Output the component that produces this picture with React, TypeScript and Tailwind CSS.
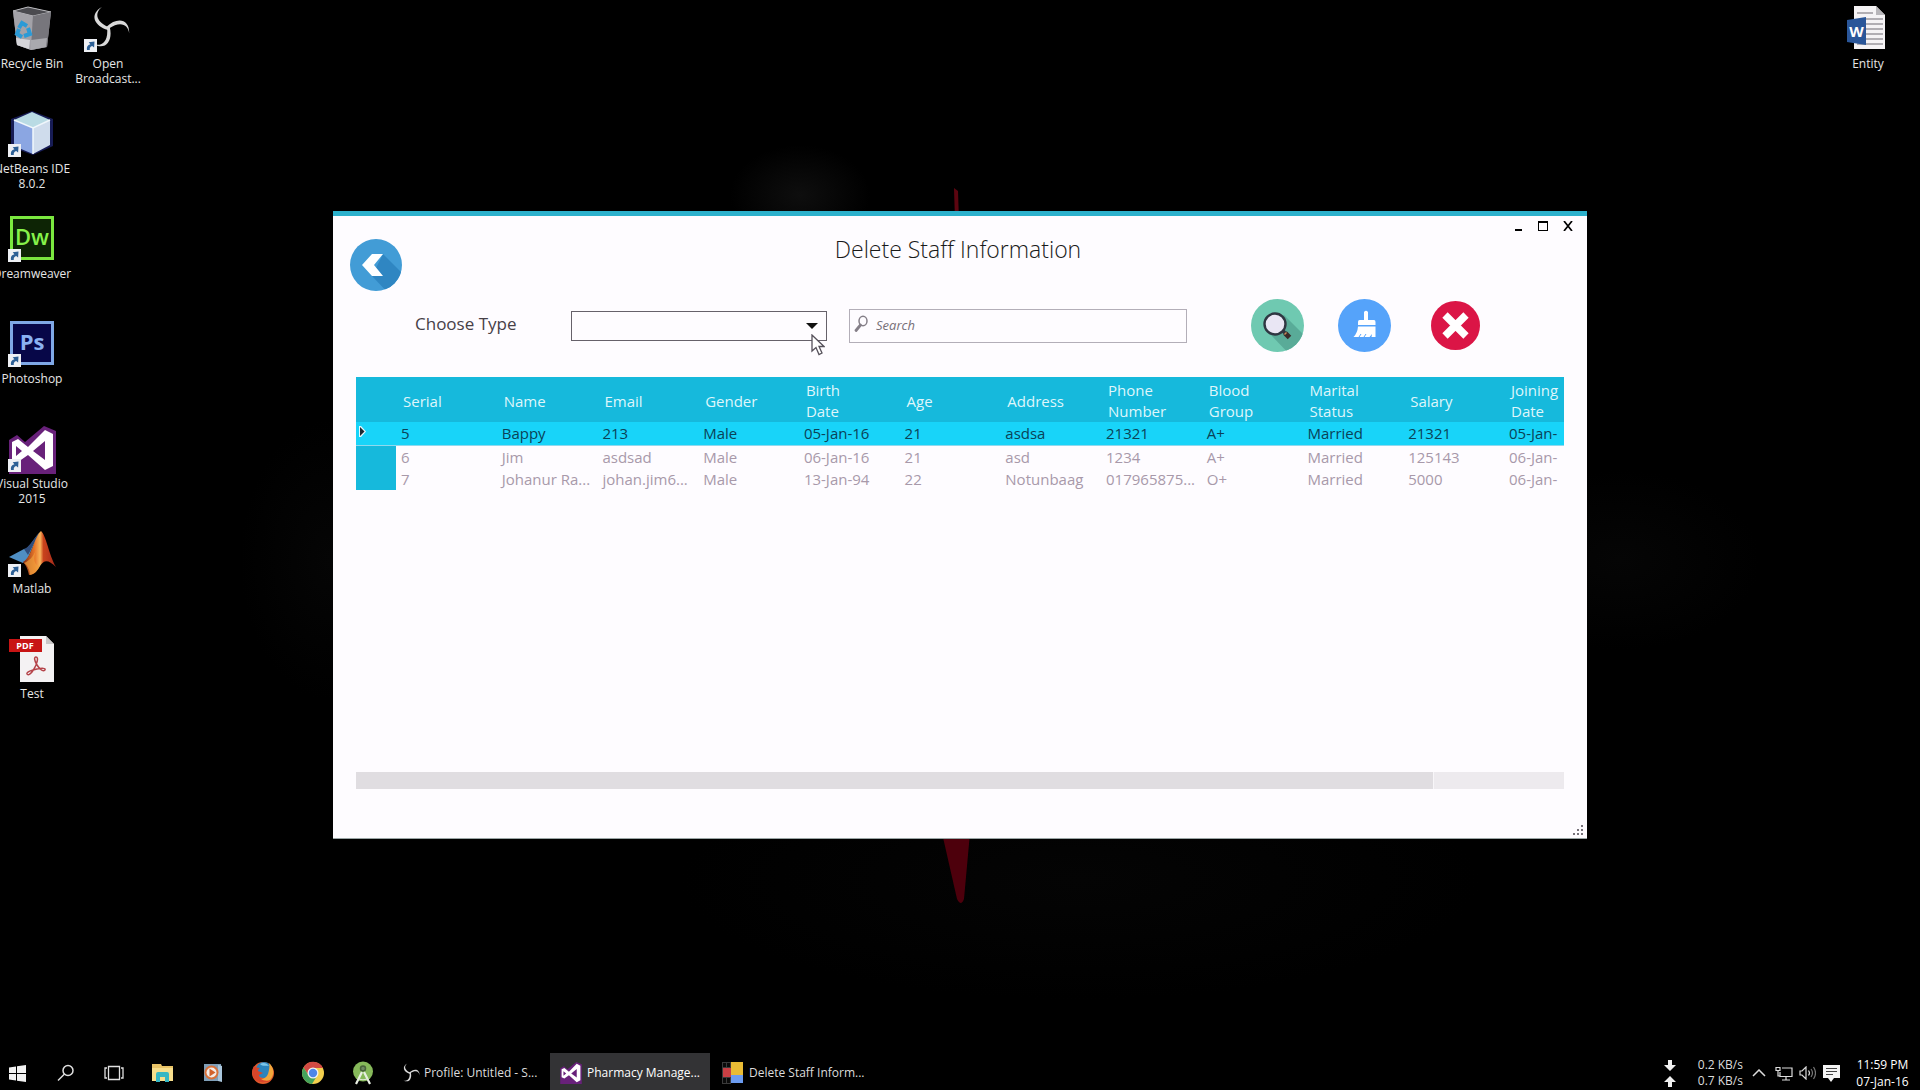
import React from "react";

function ShortcutArrow() {
  return (
    <svg viewBox="0 0 13 13" className="absolute bottom-0 left-0 size-[13px]" aria-hidden="true">
      <rect width="13" height="13" fill="#eef0f4" />
      <path d="M3 11c-.6-3 .6-5 3.400-5.700L4.700 3.300 10.500 2.500l-.4 5.900-1.900-1.500C6.300 7.500 5.500 8.800 5.800 11z" fill="#2c5f95" />
    </svg>
  );
}

function ObsMark({ className }: { className: string }) {
  return (
    <svg viewBox="0 0 44 44" className={className} aria-hidden="true">
      <g fill="#d9d9d9">
        <path d="M16 1C9 6 9 15 22 21 23 22 23 23 22 24 8 20 3 8 16 1z" />
        <path d="M16 1C9 6 9 15 22 21 23 22 23 23 22 24 8 20 3 8 16 1z" transform="rotate(120 22 22)" />
        <path d="M16 1C9 6 9 15 22 21 23 22 23 23 22 24 8 20 3 8 16 1z" transform="rotate(240 22 22)" />
      </g>
    </svg>
  );
}

function VsMark({ className }: { className: string }) {
  return (
    <svg viewBox="0 0 47 48" className={className} aria-hidden="true">
      <path d="M0 14 8 9l8 7L35 0l12 5v43H0z" fill="#68217a" />
      <path
        fillRule="evenodd"
        d="M3 16l6-3 10 8L36 4l8 4v32l-8 4L19 29 9 36l-6-3zM7 20v10l6-5zM36 15 24 25l12 9z"
        fill="#fff"
      />
    </svg>
  );
}

function RecycleBin() {
  return (
    <svg viewBox="0 0 44 44" className="size-11" aria-hidden="true">
      <path d="M3 5 18 1l23 5-4 35-16 3L7 39z" fill="#8e8d93" />
      <path d="M3 5 18 1l23 5-18 4z" fill="#4b4b50" stroke="#b9b9bd" strokeWidth="1" />
      <path d="M3 5l20 5-2 34L7 39z" fill="#a3a2a8" />
      <path d="M23 10l18-4-4 35-16 3z" fill="#77767c" />
      <path d="M6 32l14 2-1 9-12-4z" fill="#d5d5d9" />
      <path d="M21 34l16-2-1 9-15 3z" fill="#a9a9ae" />
      <g fill="none" stroke="#2b9ad6" strokeWidth="4">
        <path d="M9 22l3-5 5 3" />
        <path d="M18 22l2 6-6 2" />
        <path d="M12 31l-5-3 2-5" />
      </g>
    </svg>
  );
}

function NetBeans() {
  return (
    <svg viewBox="0 0 44 44" className="size-11" aria-hidden="true">
      <path d="M22 0 43 8v27L23 44 1 36V8z" fill="#171c55" />
      <path d="M22 1 40 9 23 17 4 9z" fill="#b9dbe4" />
      <path d="M4 9l19 8v26L4 35z" fill="#8ba6e2" />
      <path d="M23 17l17-8v25l-17 9z" fill="#cfdcec" />
      <path d="M4 9l19 8 17-8M23 17v26" fill="none" stroke="#f1f7fc" strokeWidth="1.500" />
    </svg>
  );
}

function Dreamweaver() {
  return (
    <span className="flex size-11 items-center justify-center border-[3px] border-[#7be83f] bg-[#0d2405] pb-1 text-[22px] leading-none font-semibold text-[#86f24a]">
      Dw
    </span>
  );
}

function Photoshop() {
  return (
    <span className="flex size-11 items-center justify-center border-[3px] border-[#7fa8e6] bg-[#070748] pb-1 text-[22px] leading-none font-bold text-[#8ab2f2]">
      Ps
    </span>
  );
}

function Matlab() {
  return (
    <svg viewBox="0 0 47 44" className="h-11 w-[47px]" aria-hidden="true">
      <defs>
        <linearGradient id="membrane" x1="0" x2="1" y1="0" y2="0">
          <stop offset="0" stopColor="#7c2a14" />
          <stop offset=".35" stopColor="#e8772a" />
          <stop offset=".52" stopColor="#f7b45a" />
          <stop offset=".62" stopColor="#c9431c" />
          <stop offset="1" stopColor="#a3281a" />
        </linearGradient>
      </defs>
      <path d="M0 26l15-8c5 0 8-8 15-16L18 29l-4 3z" fill="#4f8fc4" />
      <path d="M15 18c5-1 8-9 16-17L19 24z" fill="#2f4d7c" />
      <path d="M32 0c5 4 8 24 15 36-8-8-12-7-16-1-3 5-6 9-11 9-1-5-3-10-6-13C23 26 25 6 32 0z" fill="url(#membrane)" />
      <path d="M15 32c3 2 6 7 6 12 5-1 8-5 10-9-6 0-7-8-4-16-3 7-7 11-12 13z" fill="#f0a03c" opacity=".7" />
    </svg>
  );
}

function Pdf() {
  return (
    <svg viewBox="0 0 47 46" className="h-[46px] w-[47px]" aria-hidden="true">
      <path d="M11 0h26l8 8v38H11z" fill="#f4f2f3" />
      <path d="M37 0l8 8h-8z" fill="#c9c7c8" />
      <rect x="0" y="3" width="33" height="13" fill="#c81414" />
      <text x="16" y="13" textAnchor="middle" fontSize="9" fontWeight="700" fill="#fff">
        PDF
      </text>
      <path
        d="M27 21c3 0 1 7-2 12s-6 7-7 5 5-4 10-5 9-1 8 1-5 0-8-5-3-8-1-8z"
        fill="none"
        stroke="#b5444a"
        strokeWidth="1.500"
      />
    </svg>
  );
}

function WordDoc() {
  return (
    <svg viewBox="0 0 39 44" className="mr-1 h-11 w-[39px]" aria-hidden="true">
      <path d="M7 0h22l9 9v34H7z" fill="#f5f3f5" />
      <path d="M29 0v9h9z" fill="#b8b6ba" />
      <path d="M10 7h16M19 13h17M19 18h17M19 23h17M19 28h17M19 33h17M10 38h26" stroke="#9a989d" strokeWidth="1.500" />
      <path d="M0 14l19-3v28L0 36z" fill="#2a5699" />
      <text x="9.500" y="31" textAnchor="middle" fontSize="15" fontWeight="700" fill="#fff">
        W
      </text>
    </svg>
  );
}

type Shortcut = { lines: string[]; icon: React.ReactNode; arrow?: boolean };

const leftColumn: Shortcut[] = [
  { lines: ["Recycle Bin"], icon: <RecycleBin /> },
  { lines: ["NetBeans IDE", "8.0.2"], icon: <NetBeans />, arrow: true },
  { lines: ["Dreamweaver"], icon: <Dreamweaver />, arrow: true },
  { lines: ["Photoshop"], icon: <Photoshop />, arrow: true },
  { lines: ["Visual Studio", "2015"], icon: <VsMark className="h-12 w-[47px]" />, arrow: true },
  { lines: ["Matlab"], icon: <Matlab />, arrow: true },
  { lines: ["Test"], icon: <Pdf /> },
];

function DesktopIcon({ lines, icon, arrow }: Shortcut) {
  return (
    <a href="#" className="flex h-[105px] w-16 flex-col items-center gap-1 text-xs leading-[15px] whitespace-nowrap text-[#e6e6e6]">
      <span className="relative flex h-[46px] w-12 items-start justify-center">
        {icon}
        {arrow && <ShortcutArrow />}
      </span>
      <span className="flex flex-col items-center">
        {lines.map((l) => (
          <span key={l}>{l}</span>
        ))}
      </span>
    </a>
  );
}

function Wallpaper() {
  return (
    <div className="absolute inset-0 bg-[radial-gradient(70px_50px_at_800px_195px,#0e0e0e,transparent),radial-gradient(90px_140px_at_330px_560px,#050505,transparent),radial-gradient(140px_90px_at_1620px_560px,#050505,transparent),radial-gradient(400px_120px_at_1080px_880px,#040404,transparent)]">
      <svg viewBox="0 0 40 720" className="absolute top-[188px] left-1/2 h-[720px] w-10 -translate-x-1/2" aria-hidden="true">
        <path d="M14 0l4 3 1 30h-4z" fill="#5c0510" />
        <path d="M2 645h28l-6 66q-3 8-7 0z" fill="#4d000c" />
      </svg>
    </div>
  );
}

const columns = ["Serial", "Name", "Email", "Gender", "Birth Date", "Age", "Address", "Phone Number", "Blood Group", "Marital Status", "Salary", "Joining Date"];

const staff = [
  ["5", "Bappy", "213", "Male", "05-Jan-16", "21", "asdsa", "21321", "A+", "Married", "21321", "05-Jan-"],
  ["6", "Jim", "asdsad", "Male", "06-Jan-16", "21", "asd", "1234", "A+", "Married", "125143", "06-Jan-"],
  ["7", "Johanur Ra...", "johan.jim6...", "Male", "13-Jan-94", "22", "Notunbaag", "017965875...", "O+", "Married", "5000", "06-Jan-"],
];

function StaffTable() {
  return (
    <table className="w-full table-fixed border-collapse text-left text-[15px]">
      <colgroup>
        <col className="w-10" />
        {columns.map((c, i) => (
          <col key={c} className={i === columns.length - 1 ? "w-[60px]" : ""} />
        ))}
      </colgroup>
      <thead>
        <tr className="h-[45px] bg-[#16b9dc] leading-[21px] text-[#dff6fb]">
          <td className="p-0" />
          {columns.map((c) => (
            <th key={c} scope="col" className="p-0 pt-[3px] pl-[7px] font-normal">
              {c.split(" ").map((w) => (
                <span key={w} className="block">
                  {w}
                </span>
              ))}
            </th>
          ))}
        </tr>
      </thead>
      <tbody>
        {staff.map((row, r) => (
          <tr
            key={row[0]}
            className={
              r === 0
                ? "h-[23px] border-b border-[#8fd9ee] bg-[#18d4f9] leading-[22px] text-[#0b4257]"
                : "h-[22px] leading-[22px] text-[#a899aa]"
            }
          >
            <td className={r === 0 ? "p-0 pl-[3px]" : "bg-[#16b9dc] p-0"}>
              {r === 0 && (
                <svg viewBox="0 0 7 11" className="mb-1 h-[11px] w-[7px]" aria-hidden="true">
                  <path d="M0 0h2l5 5.500L2 11H0z" fill="#e6f8fc" />
                  <path d="M1 1l4.500 4.500L1 10z" fill="#1c2b33" />
                </svg>
              )}
            </td>
            {row.map((v, i) => (
              <td key={i} className="overflow-hidden p-0 pl-[5px] whitespace-nowrap">
                {v}
              </td>
            ))}
          </tr>
        ))}
      </tbody>
    </table>
  );
}

function StaffWindow() {
  return (
    <section className="relative mx-auto mt-[211px] w-[65.3125%] border-t-[5px] border-b border-t-[#2cb1cc] border-b-[#9aa5a5] bg-[#fefcff] text-black">
      <header className="grid grid-cols-[1fr_auto_1fr] items-start">
        <button aria-label="Back" className="mt-[23px] ml-[17px] size-[52px] justify-self-start">
          <svg viewBox="0 0 52 52" aria-hidden="true">
            <defs>
              <clipPath id="backDisc">
                <circle cx="26" cy="26" r="26" />
              </clipPath>
            </defs>
            <circle cx="26" cy="26" r="26" fill="#429cd6" />
            <path d="M33 15l22 22-14 20-19-20z" fill="#2f86c2" clipPath="url(#backDisc)" />
            <path d="M22 15h11L24 26l9 11H22L12 26z" fill="#fff" />
          </svg>
        </button>
        <h1 className="pt-[18px] pr-1 text-[23px] leading-[30px] font-light text-[#1a1a1a]">Delete Staff Information</h1>
        <div className="mt-[2px] mr-3 flex h-4 gap-[11px] justify-self-end">
          <button aria-label="Minimize" className="flex w-[14px] items-end justify-center pb-[3px]">
            <span className="h-[2px] w-[7px] bg-black" />
          </button>
          <button aria-label="Maximize" className="flex w-[14px] items-center justify-center">
            <span className="h-[10px] w-[10px] border border-t-2 border-black" />
          </button>
          <button aria-label="Close" className="flex w-[14px] items-center justify-center">
            <svg viewBox="0 0 10 10" className="size-[10px]" aria-hidden="true">
              <path d="M1 0l8 10M9 0L1 10" stroke="#000" strokeWidth="1.700" />
            </svg>
          </button>
        </div>
      </header>

      <form className="mt-2 flex h-[53px] items-center pr-[107px] pl-[82px]">
        <label htmlFor="type" className="w-[156px] pb-[3px] text-[17px] leading-6 text-[#474047]">
          Choose Type
        </label>
        <div className="relative w-64">
          <select id="type" className="block h-[30px] w-full appearance-none border border-[#66616a] bg-transparent px-2 text-[15px]">
            <option></option>
          </select>
          <svg viewBox="0 0 12 6" className="pointer-events-none absolute top-3 right-[9px] h-[6px] w-3" aria-hidden="true">
            <path d="M0 0h12L6 6z" fill="#111" />
          </svg>
          <svg viewBox="0 0 14 22" className="pointer-events-none absolute top-[23px] right-[2px] h-[22px] w-[14px]" aria-hidden="true">
            <path d="M1 1v16l4-3.500 3 7 3-1.500-3-6.500h5z" fill="#fff" stroke="#55505a" strokeWidth="1.300" />
          </svg>
        </div>
        <div className="relative ml-[22px] flex-1">
          <svg viewBox="0 0 14 18" className="absolute top-[6px] left-[5px] h-[18px] w-[14px]" aria-hidden="true">
            <ellipse cx="9" cy="6" rx="4" ry="4.700" fill="none" stroke="#857f88" strokeWidth="1.500" />
            <path d="M6.500 10L2 15.500" stroke="#857f88" strokeWidth="2.800" strokeLinecap="round" />
          </svg>
          <input
            aria-label="Search"
            placeholder="Search"
            className="block h-[34px] w-full border border-[#b3aeb8] bg-transparent pb-[2px] pl-[26px] text-[13px] italic placeholder:text-[#777078]"
          />
        </div>
        <button type="button" aria-label="Find" className="ml-16 size-[53px]">
          <svg viewBox="0 0 53 53" aria-hidden="true">
            <defs>
              <clipPath id="findDisc">
                <circle cx="26.500" cy="26.500" r="26.500" />
              </clipPath>
            </defs>
            <circle cx="26.500" cy="26.500" r="26.500" fill="#6fc9b1" />
            <path d="M33 16l25 25-12 22-30-31z" fill="#59ab98" clipPath="url(#findDisc)" />
            <path d="M31 31l7 7" stroke="#30353f" strokeWidth="3.500" />
            <path d="M34 34l4.500 4.500" stroke="#3a2b28" strokeWidth="5" />
            <path d="M35.500 33.500l-2 2" stroke="#c98a5a" strokeWidth="1.500" />
            <circle cx="24" cy="25" r="10.500" fill="#e9e6f4" stroke="#2f3742" strokeWidth="2.400" />
          </svg>
        </button>
        <button type="button" aria-label="Clear" className="ml-[34px] size-[53px]">
          <svg viewBox="0 0 53 53" aria-hidden="true">
            <circle cx="26.500" cy="26.500" r="26.500" fill="#55a3fa" />
            <path d="M26 13q2-2.500 4 0v8h6q1.500 0 1.500 2v3H20v-3q0-2 1.500-2H26z" fill="#fff" />
            <path d="M20 27.500h17.500V38h-4l.5-3-2.500 3h-16q4-4 4.500-10.500z" fill="#fff" />
            <path d="M21 38l2-3M26 38l2-3" stroke="#55a3fa" strokeWidth="1" />
          </svg>
        </button>
        <button type="button" aria-label="Delete" className="ml-10 size-[49px]">
          <svg viewBox="0 0 49 49" aria-hidden="true">
            <circle cx="24.500" cy="24.500" r="24.500" fill="#db1546" />
            <path d="M14 14l21 21M35 14L14 35" stroke="#fff" strokeWidth="7.500" />
          </svg>
        </button>
      </form>

      <div className="mx-[23px] mt-[25px] min-h-[395px]">
        <StaffTable />
      </div>
      <div className="mx-[23px] h-[17px] bg-[#edeaee]">
        <div className="h-full w-[89.2%] border-r border-[#f8f6f9] bg-[#e0dde1]" />
      </div>
      <div className="flex h-[49px] items-end justify-end p-[3px]">
        <svg viewBox="0 0 11 11" className="size-[11px]" aria-hidden="true">
          <path d="M8 1h2v2H8zM8 5h2v2H8zM4 5h2v2H4zM8 9h2v2H8zM4 9h2v2H4zM0 9h2v2H0z" fill="#77727a" />
        </svg>
      </div>
    </section>
  );
}

function FormIcon() {
  return (
    <svg viewBox="0 0 22 22" className="size-[22px]" aria-hidden="true">
      <path d="M0 0h9v22H0z" fill="#3a3a3a" />
      <path d="M1 1h3v4H1zM5 1h3v4H5zM1 16h3v5H1zM5 16h3v5H5z" fill="#0a0a0a" />
      <rect x="1" y="6" width="8" height="9" fill="#c93f44" />
      <rect x="9" y="0" width="12" height="13" fill="#e9bb35" />
      <rect x="9" y="13" width="12" height="8" fill="#6c9cf0" />
    </svg>
  );
}

const pinned: { name: string; icon: React.ReactNode }[] = [
  {
    name: "Search",
    icon: (
      <svg viewBox="0 0 18 18" className="size-[18px]" fill="none" stroke="#e0e0e0" strokeWidth="1.500">
        <circle cx="11" cy="6.500" r="5" />
        <path d="M7.500 10L1 16.500" />
      </svg>
    ),
  },
  {
    name: "Task View",
    icon: (
      <svg viewBox="0 0 20 16" className="h-4 w-5" fill="none" stroke="#e0e0e0" strokeWidth="1.300">
        <path d="M4.500 1.500h11v13h-11zM3 3H1v10h2M17 3h2v10h-2" />
      </svg>
    ),
  },
  {
    name: "File Explorer",
    icon: (
      <svg viewBox="0 0 22 20" className="h-5 w-[22px]">
        <path d="M0 1h9l1 2h11v15H0z" fill="#e9c467" />
        <path d="M0 5h21v13H0z" fill="#f7de8c" />
        <path d="M4 11q0-2 2-2h9q2 0 2 2v8h-4v-5H8v5H4z" fill="#36b7c4" />
      </svg>
    ),
  },
  {
    name: "Media Player",
    icon: (
      <svg viewBox="0 0 20 20" className="size-5">
        <path d="M1 1h17l1 17H1z" fill="#7f9fb8" />
        <path d="M15 2l4 1v16l-4-1z" fill="#a9c6dc" />
        <circle cx="8.500" cy="9.500" r="7" fill="#d8713a" />
        <circle cx="8.500" cy="9.500" r="5" fill="#f3ece8" />
        <path d="M6.500 5.500l6 4-6 4z" fill="#d3622c" />
      </svg>
    ),
  },
  {
    name: "Firefox",
    icon: (
      <svg viewBox="0 0 24 24" className="size-6">
        <circle cx="12" cy="12" r="11" fill="#e1592a" />
        <circle cx="13" cy="9" r="8" fill="#2b84bd" />
        <path d="M18 2c5 4 6 12 1 17s-13 3-14-3c4 4 10 2 12-3 1-4 2-7 1-11z" fill="#f2a63b" />
        <path d="M3 5c-3 5-2 12 3 15s11 2 14-1c-7 2-12-1-12-5l4-2-5-2c0-2 2-3 2-3-3 0-4-1-6-2z" fill="#d9452a" />
        <path d="M9 3c3-2 7-1 9 2-3-1-6 1-9-2z" fill="#7cc6ea" />
      </svg>
    ),
  },
  {
    name: "Chrome",
    icon: (
      <svg viewBox="0 0 24 24" className="size-6">
        <circle cx="12" cy="12" r="11" fill="#f3cf4d" />
        <path d="M2.500 6.500A11 11 0 0 1 22 7H12a5 5 0 0 0-4.300 7.500z" fill="#d24a43" />
        <path d="M2.500 6.500A11 11 0 0 0 11 23l5.300-8.500a5 5 0 0 1-8.600 0z" fill="#45a35b" />
        <circle cx="12" cy="12" r="5.500" fill="#f2f2f2" />
        <circle cx="12" cy="12" r="4.200" fill="#4d86e8" />
      </svg>
    ),
  },
  {
    name: "Android Studio",
    icon: (
      <svg viewBox="0 0 24 24" className="size-6">
        <circle cx="12" cy="10.500" r="10" fill="#86b95a" />
        <circle cx="12" cy="7.500" r="2.500" fill="#6f8a62" stroke="#48633a" strokeWidth="1.500" />
        <path d="M11 11L5 23M13 11l6 12" fill="none" stroke="#e8efe2" strokeWidth="2.200" />
        <path d="M7.500 17.500q4.500 2.500 9 0" fill="none" stroke="#dfe8d8" strokeWidth="1.200" />
      </svg>
    ),
  },
];

function Taskbar() {
  return (
    <footer className="relative flex h-[37px] items-stretch text-xs text-[#dcdcdc]">
      <button aria-label="Start" className="flex w-[42px] items-center pt-[3px] pl-[9px]">
        <svg viewBox="0 0 17 17" className="size-[17px]" aria-hidden="true">
          <path d="M0 2.500l7-1V8H0zM8 1.300L17 0v8H8zM0 9h7v6.500l-7-1zM8 9h9v8l-9-1.300z" fill="#f2f2f2" />
        </svg>
      </button>
      <nav className="flex">
        {pinned.map((p, i) => (
          <button
            key={p.name}
            aria-label={p.name}
            className={i < 2 ? "flex w-12 items-center justify-center pt-[3px]" : "flex w-[50px] items-center justify-center pt-[3px]"}
          >
            {p.icon}
          </button>
        ))}
      </nav>
      <div className="flex">
        <button className="flex w-[162px] items-center gap-1 pt-[3px] pl-3 whitespace-nowrap">
          <ObsMark className="size-5" />
          Profile: Untitled - S...
        </button>
        <button className="flex w-40 items-center gap-[5px] bg-[#333335] pt-[3px] pl-[10px] whitespace-nowrap text-white">
          <VsMark className="size-[22px]" />
          Pharmacy Manage...
        </button>
        <button className="flex w-40 items-center gap-[5px] pt-[3px] pl-3 whitespace-nowrap">
          <FormIcon />
          Delete Staff Inform...
        </button>
      </div>
      <div className="ml-auto flex items-center pt-[3px] pr-[11px]">
        <svg viewBox="0 0 12 28" className="mr-[22px] h-7 w-3" aria-hidden="true">
          <path d="M4 1h4v5h4l-6 6-6-6h4zM4 28h4v-5h4l-6-6-6 6h4z" fill="#f0f0f0" />
        </svg>
        <div className="mr-[9px] flex flex-col text-right leading-4">
          <span>0.2 KB/s</span>
          <span>0.7 KB/s</span>
        </div>
        <svg viewBox="0 0 14 8" className="mr-[9px] h-2 w-[14px]" aria-hidden="true">
          <path d="M1 7l6-6 6 6" fill="none" stroke="#dcdcdc" strokeWidth="1.500" />
        </svg>
        <svg viewBox="0 0 18 15" className="mr-[6px] h-[15px] w-[18px]" aria-hidden="true" fill="none" stroke="#dcdcdc" strokeWidth="1.200">
          <path d="M7 2h10v8.500H5V6M11 10.500V14M7 14h8M1 1.500h4v3H1zM3 5v5h2" />
        </svg>
        <svg viewBox="0 0 17 14" className="mr-[7px] h-[14px] w-[17px]" aria-hidden="true" fill="none" stroke="#dcdcdc" strokeWidth="1.200">
          <path d="M1 5h2l4-4v12L3 9H1z" />
          <path d="M9.500 4.500q2 2.500 0 5" />
          <path d="M12 3q3 4 0 8M14.500 1q4 6 0 12" stroke="#777" />
        </svg>
        <svg viewBox="0 0 17 17" className="h-[17px] w-[17px]" aria-hidden="true">
          <path d="M0 0h17v13h-6l-3 4-3-4H0z" fill="#f5f5f5" />
          <path d="M3 3.500h11M3 6.500h11M3 9.500h7" stroke="#444" strokeWidth="1.200" />
        </svg>
        <div className="ml-4 flex w-[53px] flex-col items-center leading-[17px] whitespace-nowrap text-white">
          <span>11:59 PM</span>
          <span>07-Jan-16</span>
        </div>
      </div>
    </footer>
  );
}

export default function App() {
  return (
    <div className="relative flex min-h-screen flex-col overflow-hidden bg-black font-['Open_Sans','Noto_Sans',sans-serif]">
      <Wallpaper />
      <main className="relative flex-1">
        <div className="absolute top-[6px] left-0 flex gap-3">
          <div className="flex flex-col">
            {leftColumn.map((s) => (
              <DesktopIcon key={s.lines[0]} {...s} />
            ))}
          </div>
          <DesktopIcon lines={["Open", "Broadcast..."]} icon={<ObsMark className="size-11" />} arrow />
        </div>
        <div className="absolute top-[6px] right-5">
          <DesktopIcon lines={["Entity"]} icon={<WordDoc />} />
        </div>
        <StaffWindow />
      </main>
      <Taskbar />
    </div>
  );
}
